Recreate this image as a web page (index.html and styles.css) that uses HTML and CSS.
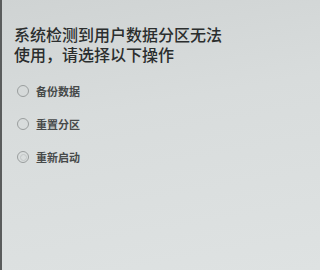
FILE: index.html
```html
<!DOCTYPE html>
<html lang="zh">
<head>
<meta charset="utf-8">
<link rel="stylesheet" href="styles.css">
</head>
<body>
<div class="screen">
  <h1 class="title">系统检测到用户数据分区无法使用，请选择以下操作</h1>
  <ul class="options">
    <li class="option"><span class="radio"></span><span class="label">备份数据</span></li>
    <li class="option"><span class="radio"></span><span class="label">重置分区</span></li>
    <li class="option"><span class="radio faint"></span><span class="label">重新启动</span></li>
  </ul>
</div>
</body>
</html>
```

FILE: styles.css
```css
html, body {
  margin: 0;
  padding: 0;
  height: 100%;
}
body {
  font-family: "Noto Sans CJK SC", "Noto Sans", sans-serif;
  background: linear-gradient(170deg, #cfd3d3 0%, #d8dcdc 40%, #dee2e2 100%);
}
.screen {
  height: 100%;
  box-sizing: border-box;
  border-left: 2px solid #5a5c5c;
  padding: 24px 16px 0 12px;
}
.title {
  margin: 0;
  width: 212px;
  font-size: 16px;
  line-height: 20px;
  font-weight: 500;
  color: #2b2e2e;
}
.options {
  list-style: none;
  margin: 20px 0 0 0;
  padding: 0 0 0 3px;
  display: flex;
  flex-direction: column;
  gap: 19px;
}
.option {
  display: flex;
  align-items: center;
  gap: 7px;
  height: 14px;
}
.radio {
  width: 10px;
  height: 10px;
  border: 1.5px solid #9a9e9e;
  border-radius: 50%;
  box-sizing: content-box;
  display: flex;
  align-items: center;
  justify-content: center;
}
.radio.faint::after {
  content: "";
  width: 5px;
  height: 5px;
  border-radius: 50%;
  border: 1px solid #c3c7c7;
}
.label {
  font-size: 11px;
  line-height: 14px;
  font-weight: 700;
  color: #474a4a;
}
```
